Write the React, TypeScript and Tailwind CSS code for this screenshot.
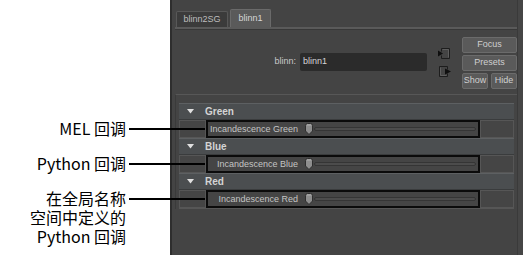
import React from "react";

const ui = "font-['Liberation_Sans',Arial,sans-serif]";
const cjk = "font-['Noto_Sans_CJK_SC','Noto_Sans',sans-serif]";

const Handle = () => (
  <svg width="10" height="12" viewBox="0 0 10 12" className="shrink-0">
    <path d="M1.5 2.5 Q1.5 0.5 3.5 0.5 H6.5 Q8.5 0.5 8.5 2.5 V8 L5 11.5 L1.5 8 Z" fill="#8e8e8e" stroke="#2e2e2e" />
    <path d="M3 2 H7" stroke="#b0b0b0" />
  </svg>
);

const InIcon = () => (
  <svg width="14" height="12" viewBox="0 0 14 12">
    <path d="M4.5 0.5 H12.5 V10.5 H4.5 V7.5 M4.5 3.5 V0.5" fill="none" stroke="#1d1d1d" />
    <path d="M5.5 1.5 H11.5 V9.5" fill="none" stroke="#5e5e5e" />
    <path d="M1 2.5 L6 5.5 L1 8.5 Z" fill="#0f0f0f" />
  </svg>
);

const OutIcon = () => (
  <svg width="14" height="12" viewBox="0 0 14 12">
    <path d="M9.5 3.5 V0.5 H1.5 V10.5 H9.5 V7.5" fill="none" stroke="#1d1d1d" />
    <path d="M2.5 1.5 V9.5 H8.5" fill="none" stroke="#5e5e5e" />
    <path d="M7 2.5 L13 5.5 L7 8.5 Z" fill="#0f0f0f" />
  </svg>
);

const Section = ({ title, attr }: { title: string; attr: string }) => (
  <>
    <div className="flex h-[17px] items-center border-t border-[#5d6062] border-b border-b-[#3a3c3d] bg-[#4b4e50]">
      <svg width="8" height="5" viewBox="0 0 8 5" className="ml-[8px]">
        <path d="M0 0 H7 L3.5 4.5 Z" fill="#e0e0e0" />
      </svg>
      <span className="ml-[10px] text-[10px] font-bold text-[#d4d4d4]">{title}</span>
    </div>
    <div className="flex h-[18px]">
      <div className="w-[27px] border border-[#565656] bg-[#454545]" />
      <div className="flex w-[274px] items-center border-2 border-[#0b0b0b] bg-[#454545]">
        <span className="w-[90px] text-right text-[9px] leading-none text-[#c4c4c4] whitespace-nowrap">
          {attr}
        </span>
        <div className="ml-[6px]">
          <Handle />
        </div>
        <div className="mr-[2px] h-[4px] flex-1 rounded-full border border-[#353535] bg-[#4c4c4c]" />
      </div>
      <div className="flex-1 border border-[#565656] bg-[#454545]" />
    </div>
  </>
);

const Btn = ({ label, w }: { label: string; w: string }) => (
  <div
    className={`${w} flex h-[16px] items-center justify-center rounded-[2px] border border-[#6b6b6b] bg-[#5a5a5a] text-[9px] text-[#cfcfcf]`}
  >
    {label}
  </div>
);

const Note = ({ top, lines }: { top: string; lines: string[] }) => (
  <div className={`absolute left-0 ${top} flex items-start`}>
    <div className={`w-[126px] text-right text-[16px] leading-[19px] text-black ${cjk}`}>
      {lines.map((l) => (
        <div key={l}>{l}</div>
      ))}
    </div>
    <div className="ml-[3px] mt-[9px] h-[2px] w-[76px] bg-black" />
  </div>
);

export default function App() {
  return (
    <div className={`relative flex h-[255px] w-[523px] overflow-hidden bg-white ${ui}`}>
      <div className="w-[170px] shrink-0" />
      <div className="flex flex-1 border-l-2 border-[#2e2e2e] bg-[#444444]">
        <div className="flex w-[345px] flex-col">
          {/* tabs */}
          <div className="mt-[9px] flex h-[18px] items-end gap-[2px] pl-[4px]">
            <div className="flex h-[16px] w-[52px] items-center justify-center rounded-t-[2px] border border-b-0 border-[#585858] bg-[#3b3b3b] text-[9px] text-[#bdbdbd]">
              blinn2SG
            </div>
            <div className="flex h-[18px] w-[41px] items-center justify-center rounded-t-[2px] border border-b-0 border-[#6a6a6a] bg-[#5a5a5a] text-[9px] text-[#d6d6d6]">
              blinn1
            </div>
          </div>
          <div className="ml-[3px] h-[3px] border-t-2 border-[#5a5a5a] border-b border-b-[#383838]" />

          {/* node row */}
          <div className="flex h-[64px] pt-[4px]">
            <div className="flex flex-1 items-center justify-end pb-[4px]">
              <span className="text-[9px] text-[#c8c8c8]">blinn:</span>
              <div className="ml-[4px] flex h-[18px] w-[127px] items-center rounded-[2px] bg-[#2b2b2b] pl-[3px] text-[9px] text-[#d6d6d6]">
                blinn1
              </div>
            </div>
            <div className="ml-[10px] flex w-[14px] flex-col pt-[14px]">
              <InIcon />
              <div className="ml-[1px] mt-[6px]">
                <OutIcon />
              </div>
            </div>
            <div className="ml-[11px] flex w-[55px] flex-col gap-[2px] pt-[3px]">
              <Btn label="Focus" w="w-[55px]" />
              <Btn label="Presets" w="w-[55px]" />
              <div className="flex gap-[3px]">
                <Btn label="Show" w="w-[26px]" />
                <Btn label="Hide" w="w-[26px]" />
              </div>
            </div>
          </div>

          {/* attribute frame */}
          <div className="ml-[3px] border-t border-[#575757] border-l border-l-[#3a3a3a]">
            <div className="ml-[3px] mr-[3px] flex flex-col border-b border-[#565656] pt-[8px]">
              <Section title="Green" attr="Incandescence Green" />
              <Section title="Blue" attr="Incandescence Blue" />
              <Section title="Red" attr="Incandescence Red" />
            </div>
          </div>
        </div>
        <div className="flex-1 border-l border-[#3a3a3a] bg-[#464646]" />
      </div>

      <Note top="top-[119px]" lines={["MEL 回调"]} />
      <Note top="top-[154px]" lines={["Python 回调"]} />
      <Note top="top-[189px]" lines={["在全局名称", "空间中定义的", "Python 回调"]} />
    </div>
  );
}
